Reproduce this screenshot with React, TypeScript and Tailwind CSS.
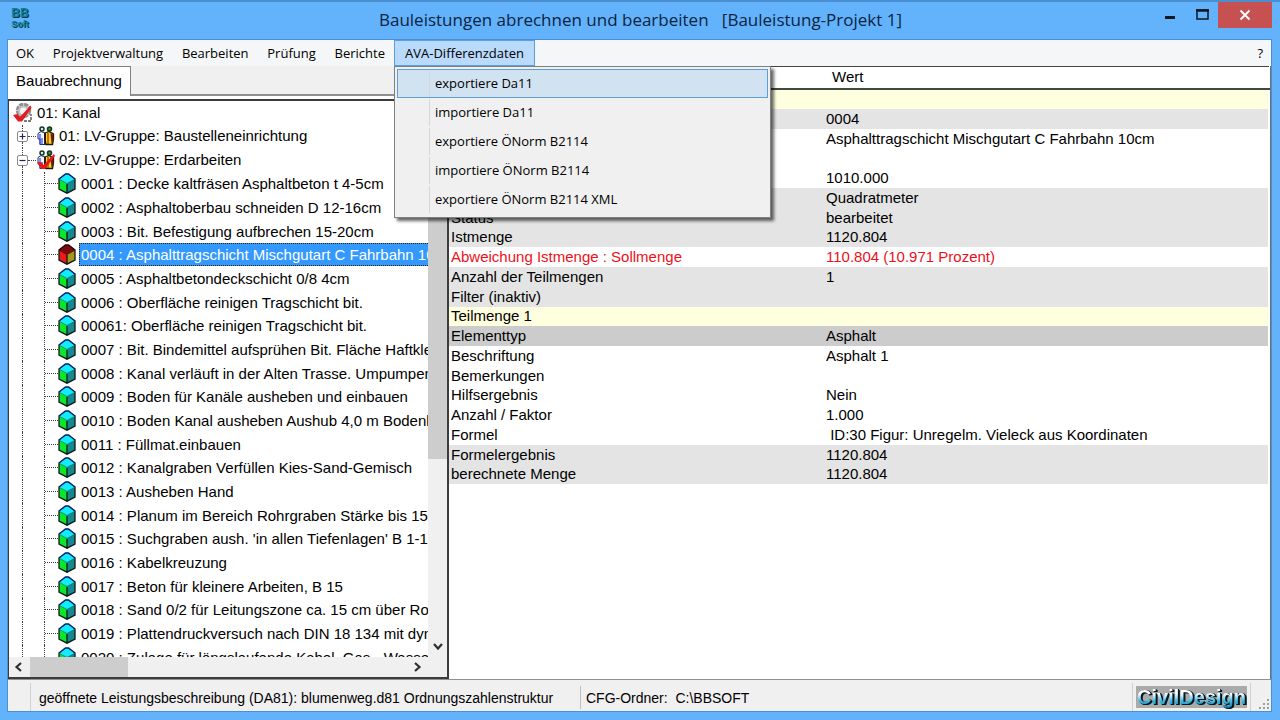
import React, { useState } from 'react';
import clsx from 'clsx';

const MENUS = ['OK', 'Projektverwaltung', 'Bearbeiten', 'Prüfung', 'Berichte'];

const EXPORTS = [
  'exportiere Da11',
  'importiere Da11',
  'exportiere ÖNorm B2114',
  'importiere ÖNorm B2114',
  'exportiere ÖNorm B2114 XML',
];

const POSITIONS = [
  '0001 : Decke kaltfräsen Asphaltbeton t 4-5cm',
  '0002 : Asphaltoberbau schneiden D 12-16cm',
  '0003 : Bit. Befestigung aufbrechen 15-20cm',
  '0004 : Asphalttragschicht Mischgutart C Fahrbahn 10cm',
  '0005 : Asphaltbetondeckschicht 0/8 4cm',
  '0006 : Oberfläche reinigen Tragschicht bit.',
  '00061: Oberfläche reinigen Tragschicht bit.',
  '0007 : Bit. Bindemittel aufsprühen Bit. Fläche Haftkleb',
  '0008 : Kanal verläuft in der Alten Trasse. Umpumpen',
  '0009 : Boden für Kanäle ausheben und einbauen',
  '0010 : Boden Kanal ausheben Aushub 4,0 m Bodenk',
  '0011 : Füllmat.einbauen',
  '0012 : Kanalgraben Verfüllen Kies-Sand-Gemisch',
  '0013 : Ausheben Hand',
  '0014 : Planum im Bereich Rohrgraben Stärke bis 15 cm',
  "0015 : Suchgraben aush. 'in allen Tiefenlagen' B 1-1,5",
  '0016 : Kabelkreuzung',
  '0017 : Beton für kleinere Arbeiten, B 15',
  '0018 : Sand 0/2 für Leitungszone ca. 15 cm über Rohr',
  '0019 : Plattendruckversuch nach DIN 18 134 mit dyna',
  '0020 : Zulage für längslaufende Kabel, Gas-, Wasser',
];

interface Row {
  label?: string;
  value?: string;
  tone: 'head' | 'grey' | 'dark' | 'plain' | 'alert';
}

const ROWS: Row[] = [
  { tone: 'head' },
  { value: '0004', tone: 'grey' },
  { value: 'Asphalttragschicht Mischgutart C Fahrbahn 10cm', tone: 'plain' },
  { tone: 'plain' },
  { value: '1010.000', tone: 'plain' },
  { value: 'Quadratmeter', tone: 'grey' },
  { label: 'Status', value: 'bearbeitet', tone: 'grey' },
  { label: 'Istmenge', value: '1120.804', tone: 'grey' },
  { label: 'Abweichung Istmenge : Sollmenge', value: '110.804 (10.971 Prozent)', tone: 'alert' },
  { label: 'Anzahl der Teilmengen', value: '1', tone: 'grey' },
  { label: 'Filter (inaktiv)', tone: 'grey' },
  { label: 'Teilmenge 1', tone: 'head' },
  { label: 'Elementtyp', value: 'Asphalt', tone: 'dark' },
  { label: 'Beschriftung', value: 'Asphalt 1', tone: 'plain' },
  { label: 'Bemerkungen', tone: 'plain' },
  { label: 'Hilfsergebnis', value: 'Nein', tone: 'plain' },
  { label: 'Anzahl / Faktor', value: '1.000', tone: 'plain' },
  { label: 'Formel', value: '\u00a0ID:30 Figur: Unregelm. Vieleck aus Koordinaten', tone: 'plain' },
  { label: 'Formelergebnis', value: '1120.804', tone: 'grey' },
  { label: 'berechnete Menge', value: '1120.804', tone: 'grey' },
];

const TONES = {
  head: 'bg-[#feffdf]',
  grey: 'bg-[#e4e4e4]',
  dark: 'bg-[#cccccc]',
  plain: 'bg-white',
  alert: 'bg-white text-[#f01018]',
};

function Cube({ active }: { active: boolean }) {
  return (
    <svg width="18" height="21" viewBox="0 0 18 21" className="shrink-0" aria-hidden="true">
      <path d="M1 5.5 L7 1 H11 L17 5.5 V16 L9 20.5 L1 16 Z" fill={active ? '#7a0c10' : '#10ecfc'} />
      <path d="M1 6 L9 10.5 V20.5 L1 16 Z" fill={active ? '#f01818' : '#08e828'} />
      <path d="M9 10.5 L17 6 V16 L9 20.5 Z" fill={active ? '#a39a1c' : '#148a8c'} />
      <path d="M1 6 L7.5 1 H10.5 L17 6" fill="none" stroke={active ? '#2c0608' : '#0a1a6a'} strokeWidth="1.5" />
      <path d="M1 5.5 V16 L9 20.2 L17 16 V5.5 M9 11 V20" fill="none" stroke="#101818" strokeWidth="1.3" />
      <path d="M1.5 6.5 L9 10.5 L16.5 6.5" fill="none" stroke={active ? '#4c0808' : '#107878'} strokeWidth="0.8" />
    </svg>
  );
}

function People({ checked }: { checked: boolean }) {
  return (
    <svg width="18" height="20" viewBox="0 0 18 20" className="shrink-0" aria-hidden="true">
      <circle cx="5" cy="3" r="2" fill="#d8ecd8" stroke="#103820" strokeWidth="1.5" />
      <circle cx="12.5" cy="3" r="2" fill="#4a8a38" stroke="#103820" strokeWidth="1.5" />
      <path d="M1 7.5 L4 5.5 L8 7 V18.5 H3 V13 H1 Z" fill="#f4f4ff" stroke="#202870" strokeWidth="1" />
      <path d="M3 8 V18.5 M5 12 V18.5" stroke="#3848e0" strokeWidth="1.2" />
      <path d="M8 7 L12 5.5 L16.5 8 V13 L15.5 18.5 H9 L8 13 Z" fill="#f4d81c" stroke="#181808" strokeWidth="1.3" />
      <path d="M13.5 7 L16.5 9 V14 L14.5 18 Z" fill="#78140c" />
      <path d="M11 7 V18" stroke="#c02818" strokeWidth="1.3" />
      <path d="M8 7 V18.5" stroke="#101010" strokeWidth="1.5" />
      {checked && <path d="M0 13 L4 12 L6.5 15 L17 4 L18 6 L8 19 H4.5 Z" fill="#e81818" />}
    </svg>
  );
}

function RootIcon() {
  return (
    <svg width="19" height="20" viewBox="0 0 19 20" className="shrink-0" aria-hidden="true">
      <circle cx="10.5" cy="7.5" r="6" fill="#f4f4f4" stroke="#8e8e8e" strokeWidth="3.5" strokeDasharray="4 0.7" />
      <circle cx="10.5" cy="8" r="4.5" fill="none" stroke="#c0c0c0" strokeWidth="2" />
      <path d="M11 18 H18 V11" fill="none" stroke="#7a7a7a" strokeWidth="1.8" strokeDasharray="3 1" />
      <path d="M0 12 L4.5 11 L7 14 L17.5 2.5 L18.5 5 L9 18.5 H5 Z" fill="#e31b23" />
    </svg>
  );
}

function Arrow({ className }: { className?: string }) {
  return (
    <svg width="10" height="10" viewBox="0 0 10 10" className={className} aria-hidden="true">
      <path d="M3 1 L7.5 5 L3 9" fill="none" stroke="#303030" strokeWidth="2.2" />
    </svg>
  );
}

function TreeGroup({ label, open, onToggle }: { label: string; open: boolean; onToggle?: () => void }) {
  return (
    <li role="treeitem" aria-expanded={open} className="flex min-h-0 items-center pl-2">
      <span className="flex w-[11px] flex-col items-center self-stretch">
        <span className="w-px flex-1 border-l border-dotted border-[#404040]" />
        <button
          type="button"
          onClick={onToggle}
          aria-label={label + ' umschalten'}
          className="flex size-[11px] shrink-0 items-center justify-center rounded-[2px] border border-[#8a8a8a] bg-white"
        >
          <svg width="7" height="7" viewBox="0 0 7 7" aria-hidden="true">
            <path d={open ? 'M0.5 3.5 H6.5' : 'M0.5 3.5 H6.5 M3.5 0.5 V6.5'} stroke="#202060" strokeWidth="1.2" />
          </svg>
        </button>
        <span className="w-px flex-1 border-l border-dotted border-[#404040]" />
      </span>
      <span className="mr-px w-2 border-t border-dotted border-[#404040]" />
      <People checked={open} />
      <span className="pl-1 whitespace-nowrap">{label}</span>
    </li>
  );
}

function TreePanel() {
  const [selected, setSelected] = useState(3);
  const [open, setOpen] = useState(true);

  return (
    <div className="flex min-h-0 flex-1 flex-col border-t-2 border-r-2 border-b-2 border-l border-[#3c3c40] bg-white">
      <div className="flex min-h-0 flex-1">
        <div className="min-w-0 flex-1 overflow-hidden">
          <ul role="tree" aria-label="Leistungsverzeichnis" className="grid h-[568px] grid-rows-24">
            <li role="treeitem" className="flex min-h-0 items-center pl-1">
              <RootIcon />
              <span className="pl-[5px]">01: Kanal</span>
            </li>
            <TreeGroup label="01: LV-Gruppe: Baustelleneinrichtung" open={false} />
            <TreeGroup label="02: LV-Gruppe: Erdarbeiten" open={open} onToggle={() => setOpen(!open)} />
            {open && POSITIONS.map((name, i) => (
              <li key={name} role="treeitem" aria-selected={i === selected} className="flex min-h-0 items-center pl-[13px]">
                <span className="w-[22px] shrink-0 self-stretch border-l border-dotted border-[#404040]" />
                <span className="flex w-[14px] shrink-0 items-center self-stretch border-l border-dotted border-[#404040]">
                  <span className="w-full border-t border-dotted border-[#404040]" />
                </span>
                <Cube active={i === selected} />
                <button
                  type="button"
                  onClick={() => setSelected(i)}
                  className={clsx(
                    'ml-[3px] h-[23px] min-w-0 flex-1 overflow-hidden border pl-px text-left whitespace-nowrap',
                    i === selected ? 'border-dotted border-[#302000] bg-[#3399ff] text-white' : 'border-transparent',
                  )}
                >
                  {name}
                </button>
              </li>
            ))}
          </ul>
        </div>
        {/* vertical scrollbar */}
        <div className="flex w-[19px] flex-col items-center bg-[#f0f0f0]">
          <div className="h-[358px] w-[19px] shrink-0 bg-[#cdcdcd]" />
          <div className="flex-1" />
          <button type="button" aria-label="Nach unten" className="pb-1.5">
            <Arrow className="rotate-90" />
          </button>
        </div>
      </div>
      {/* horizontal scrollbar */}
      <div className="flex h-5 shrink-0 items-center bg-[#f0f0f0] pr-[25px]">
        <button type="button" aria-label="Nach links" className="w-[21px] pl-[5px]">
          <Arrow className="rotate-180" />
        </button>
        <div className="h-full w-[98px] bg-[#cdcdcd]" />
        <div className="flex-1" />
        <button type="button" aria-label="Nach rechts">
          <Arrow />
        </button>
      </div>
    </div>
  );
}

function PropertyTable() {
  return (
    <div className="min-w-0 flex-1 border-r border-[#707070] bg-white">
      <table className="w-full table-fixed border-collapse text-left">
        <colgroup>
          <col className="w-[376px]" />
          <col />
        </colgroup>
        <thead>
          <tr className="h-[22px] border-t border-b-2 border-[#404840] leading-[18px]">
            <td />
            <th className="p-0 pl-[7px] font-normal">Wert</th>
          </tr>
        </thead>
        <tbody>
          {ROWS.map((row, i) => (
            <tr
              key={i}
              className={clsx('border-r-2 border-r-white leading-[18px]', i % 4 === 3 ? 'h-[19px]' : 'h-5', TONES[row.tone])}
            >
              <td className="p-0 pl-[2px]">{row.label}</td>
              <td className="p-0 pl-px">{row.value}</td>
            </tr>
          ))}
        </tbody>
      </table>
    </div>
  );
}

function DifferenzMenu() {
  const [isOpen, setIsOpen] = useState(true);
  const [hover, setHover] = useState(0);

  return (
    <div className="relative">
      <button
        type="button"
        onClick={() => setIsOpen(!isOpen)}
        aria-expanded={isOpen}
        className="h-[26px] w-[141px] border border-[#5c9fe0] bg-[#b9dafa] pt-0.5"
      >
        AVA-Differenzdaten
      </button>
      {isOpen && (
        <ul role="menu" className="absolute top-[26px] left-0 z-10 w-[377px] border border-[#808080] bg-[#f0f0f0] p-0.5 pb-[3px] shadow-[3px_3px_3px_rgba(0,0,0,0.6)]">
          {EXPORTS.map((item, i) => (
            <li key={item} role="none">
              <button
                type="button"
                role="menuitem"
                onMouseEnter={() => setHover(i)}
                className={clsx(
                  'flex h-[29px] w-full items-center border text-left',
                  i === hover ? 'border-[#5c9fdc] bg-[#d1e2f0]' : 'border-transparent',
                )}
              >
                <span className="mr-[5px] w-8 self-stretch border-r border-[#d4d8dc]" />
                {item}
              </button>
            </li>
          ))}
        </ul>
      )}
    </div>
  );
}

export default function App() {
  return (
    <div className="flex h-screen flex-col border-t-2 border-[#4a8fd0] bg-[#63b2fc] pr-2 pb-2 pl-[7px] font-['Liberation_Sans',Arial,sans-serif] text-[15px] text-black">
      {/* Title bar */}
      <header className="flex h-[37px] shrink-0 items-start font-['Open_Sans','Noto_Sans',sans-serif]">
        <div className="w-[120px] pt-1.5 pl-[3px] font-['Liberation_Sans',sans-serif] font-bold text-[#0f8298]">
          <div className="w-5 text-center text-[12px] leading-[11px] [text-shadow:1px_1px_0_#083848]">BB</div>
          <div className="w-5 text-center text-[9px] leading-[10px] [text-shadow:1px_1px_0_#083848]">Soft</div>
        </div>
        <h1 className="flex-1 pt-1.5 text-center text-[17px] leading-6 whitespace-pre text-[#0c2440]">
          Bauleistungen abrechnen und bearbeiten   [Bauleistung-Projekt 1]
        </h1>
        <div className="flex h-[26px]">
          <button type="button" aria-label="Minimieren" className="w-8 pl-[10px]">
            <svg width="12" height="12" viewBox="0 0 12 12" aria-hidden="true">
              <path d="M1 8.5 H11" stroke="#101820" strokeWidth="3" />
            </svg>
          </button>
          <button type="button" aria-label="Maximieren" className="w-8 pl-[10px]">
            <svg width="14" height="12" viewBox="0 0 14 12" aria-hidden="true">
              <path d="M1 1 H12 V10 H1 Z" fill="none" stroke="#101820" strokeWidth="1.5" />
              <path d="M0 1.5 H13" stroke="#101820" strokeWidth="2.5" />
            </svg>
          </button>
          <button type="button" aria-label="Schließen" className="flex w-[54px] items-center justify-center bg-[#c75050]">
            <svg width="12" height="12" viewBox="0 0 12 12" aria-hidden="true">
              <path d="M1.5 1.5 L10.5 10.5 M10.5 1.5 L1.5 10.5" stroke="white" strokeWidth="2" />
            </svg>
          </button>
        </div>
      </header>

      <div className="flex min-h-0 flex-1 flex-col border border-[#4b8fd4] bg-[#f0f0f0]">
        {/* Menu bar */}
        <nav className="flex h-[26px] shrink-0 items-center bg-[#f5f6f7] font-['Open_Sans','Noto_Sans',sans-serif] text-[13px]">
          <div className="flex w-[386px] shrink-0 items-center justify-between pt-0.5 pr-[9px] pl-2">
            {MENUS.map((m) => (
              <button key={m} type="button">{m}</button>
            ))}
          </div>
          <DifferenzMenu />
          <button type="button" aria-label="Hilfe" className="mr-2 ml-auto pt-0.5">?</button>
        </nav>

        {/* Workspace */}
        <main className="flex min-h-0 flex-1 border-b border-[#909090]">
          <div className="flex w-[441px] shrink-0 flex-col">
            <div role="tablist" className="flex h-[30px] shrink-0">
              <button type="button" role="tab" aria-selected="true" className="h-full w-[123px] border-t border-r border-[#808080] bg-white">
                Bauabrechnung
              </button>
              <div className="flex-1 border-b-2 border-[#909090]" />
            </div>
            <div className="h-[3px] shrink-0 bg-white" />
            <TreePanel />
          </div>
          <PropertyTable />
        </main>

        {/* Status bar */}
        <footer className="mt-[3px] flex h-7 shrink-0 items-center overflow-hidden text-[14px] whitespace-nowrap">
          <div className="h-full w-[23px] shrink-0 border-r border-[#d0d0d0]" />
          <div className="w-[550px] shrink-0 overflow-hidden border-r border-[#c0c0c0] pt-0.5 pl-2">
            geöffnete Leistungsbeschreibung (DA81): blumenweg.d81 Ordnungszahlenstruktur
          </div>
          <div className="flex-1 pt-0.5 pl-[5px] whitespace-pre">CFG-Ordner:  C:\BBSOFT</div>
          <div className="flex h-full items-center border-r border-l border-[#d0d0d0] px-[3px]">
            <span className="bg-[#aaaaaa] px-px text-[20px] leading-[22px] font-bold">
              <span className="bg-linear-to-b from-white from-35% via-[#40c0e8] via-65% to-[#1080b0] bg-clip-text text-transparent [filter:drop-shadow(1px_0_0_#001820)_drop-shadow(1px_1px_0_#001820)]">
                CivilDesign
              </span>
            </span>
          </div>
          <svg width="20" height="28" viewBox="0 0 20 28" aria-hidden="true">
            <path d="M16 16h2v2h-2zM12 20h2v2h-2zM16 20h2v2h-2zM8 24h2v2h-2zM12 24h2v2h-2zM16 24h2v2h-2z" fill="#a0a0a0" />
          </svg>
        </footer>
      </div>
    </div>
  );
}
